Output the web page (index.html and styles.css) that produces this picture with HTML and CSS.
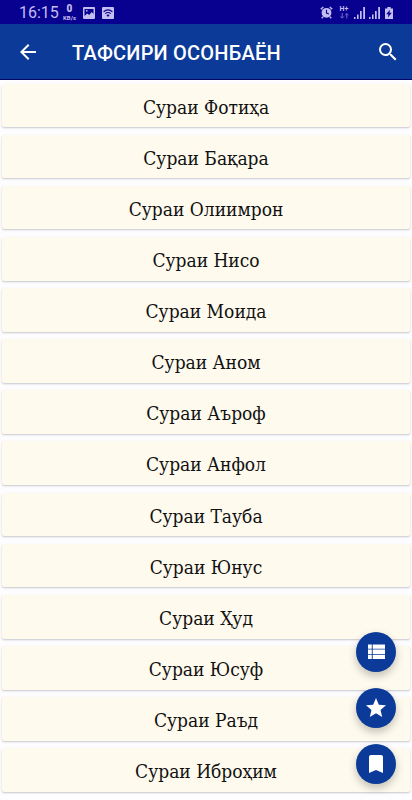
FILE: index.html
```html
<!DOCTYPE html>
<html lang="tg">
<head>
    <meta charset="UTF-8">
    <meta name="viewport" content="width=device-width, initial-scale=1.0">
    <title>Тафсири Осонбаён</title>
    <link rel="stylesheet" href="styles.css">
</head>
<body>
    <div class="status-bar">
        <span class="clock">16:15</span>
        <div class="speed"><b>0</b><span>KB/s</span></div>
        <svg class="picture" width="12" height="12" viewBox="0 0 12 12">
            <path fill-rule="evenodd" d="M1 0h10a1 1 0 0 1 1 1v10a1 1 0 0 1-1 1H1a1 1 0 0 1-1-1V1a1 1 0 0 1 1-1zM1.5 2v7l2.7-2.5 2 1.5 2.5-3 1.8 2V2zM3 3h1.5v1.5H3z"/>
        </svg>
        <svg class="wifi" width="12" height="12" viewBox="0 0 12 12">
            <rect width="12" height="12" rx="1"/>
            <path class="cut" d="M1.6 4.7q4.4-3.6 8.8 0M3.2 6.6q2.8-2.2 5.6 0"/>
            <path class="dark" d="M4.4 8q1.6-1.2 3.2 0L6 10z"/>
        </svg>
        <svg class="alarm" width="13" height="13" viewBox="0 0 13 13">
            <circle cx="6.5" cy="6.8" r="4.9"/>
            <path class="line" d="M.8 3.2L3.3 1M12.2 3.2L9.7 1M3 10.8l-1.2 1.4M10 10.8l1.2 1.4"/>
            <path class="cut" d="M6.5 3.8v3.3l2.4 1"/>
        </svg>
        <div class="network"><b>H+</b>
            <svg width="9" height="6" viewBox="0 0 9 6"><path d="M2.2 0v5M.5 3.4l1.7 1.8 1.7-1.8M6.8 5.5v-5M5.1 2.2L6.8.5l1.7 1.7"/></svg>
        </div>
        <svg class="signal" width="11" height="12" viewBox="0 0 11 12"><path d="M0 10h1.5v2H0zM3 7.5h1.6V12H3zM6 4h1.7v8H6zM9.2 0H11v12H9.2z"/></svg>
        <svg class="signal" width="11" height="12" viewBox="0 0 11 12"><path d="M0 10h1.5v2H0zM3 7.5h1.6V12H3zM6 4h1.7v8H6zM9.2 0H11v12H9.2z"/></svg>
        <svg class="battery" width="8" height="12" viewBox="0 0 8 12">
            <path d="M2.3 0h3.4v1.4H8V12H0V1.4h2.3z"/>
            <path class="dark" d="M4.9 2.7L1.2 7.2h2.2l-.5 3.2 3.9-4.7H4.5z"/>
        </svg>
    </div>

    <header class="app-bar">
        <svg class="back" width="24" height="24" viewBox="0 0 24 24"><path d="M20 11H7.83l5.59-5.59L12 4l-8 8 8 8 1.41-1.41L7.83 13H20v-2z"/></svg>
        <h1>ТАФСИРИ ОСОНБАЁН</h1>
        <svg class="search" width="24" height="24" viewBox="0 0 24 24"><path d="M15.5 14h-.79l-.28-.27A6.47 6.47 0 0 0 16 9.5 6.5 6.5 0 1 0 9.5 16c1.61 0 3.09-.59 4.23-1.57l.27.28v.79l5 4.99L20.49 19l-4.99-5zm-6 0a4.5 4.5 0 1 1 0-9 4.5 4.5 0 0 1 0 9z"/></svg>
    </header>

    <main class="list">
        <div class="card">Сураи Фотиҳа</div>
        <div class="card">Сураи Бақара</div>
        <div class="card">Сураи Олиимрон</div>
        <div class="card">Сураи Нисо</div>
        <div class="card">Сураи Моида</div>
        <div class="card">Сураи Аном</div>
        <div class="card">Сураи Аъроф</div>
        <div class="card">Сураи Анфол</div>
        <div class="card">Сураи Тауба</div>
        <div class="card">Сураи Юнус</div>
        <div class="card">Сураи Ҳуд</div>
        <div class="card">Сураи Юсуф</div>
        <div class="card">Сураи Раъд</div>
        <div class="card">Сураи Иброҳим</div>
    </main>

    <div class="buttons">
        <button class="fab"><svg width="24" height="24" viewBox="0 0 24 24"><path d="M4 4.5h3.8v4.3H4zM8.7 4.5H21v4.3H8.7zM4 9.6h3.8v4.3H4zM8.7 9.6H21v4.3H8.7zM4 14.7h3.8V19H4zM8.7 14.7H21V19H8.7z"/></svg></button>
        <button class="fab"><svg width="24" height="24" viewBox="0 0 24 24"><path d="M12 17.27L18.18 21l-1.64-7.03L22 9.24l-7.19-.61L12 2 9.19 8.63 2 9.24l5.46 4.73L5.82 21z"/></svg></button>
        <button class="fab"><svg width="24" height="24" viewBox="0 0 24 24"><path d="M17 3H7c-1.1 0-2 .9-2 2v16l7-3 7 3V5c0-1.1-.9-2-2-2z"/></svg></button>
    </div>
</body>
</html>
```

FILE: styles.css
```css
* {
    box-sizing: border-box;
}
body {
    margin: 0;
    height: 800px;
    overflow: hidden;
    background: #fdfdff;
    font-family: Roboto, sans-serif;
}
.status-bar {
    display: flex;
    align-items: center;
    height: 24px;
    padding: 1px 19px 0;
    background: #08008f;
    color: #c3bdf0;
    fill: #c3bdf0;
}
.clock {
    width: 43px;
    font-size: 16px;
    line-height: 24px;
}
.speed {
    display: flex;
    flex-direction: column;
    align-items: center;
    width: 15px;
    font-size: 6px;
    font-weight: bold;
    line-height: 7px;
}
.speed b {
    font-size: 10px;
    line-height: 10px;
}
.picture {
    margin-left: 6px;
}
.wifi {
    margin-left: 7px;
}
.cut {
    fill: none;
    stroke: #08008f;
    stroke-width: 1.1;
}
.dark {
    fill: #08008f;
}
.line {
    stroke: #c3bdf0;
    stroke-width: 1.5;
}
.alarm {
    margin-left: auto;
}
.network {
    display: flex;
    flex-direction: column;
    align-items: center;
    width: 10px;
    margin: 0 5px 0 6px;
    font-size: 7px;
    line-height: 7px;
}
.network svg {
    fill: none;
    stroke: #746ccb;
}
.signal {
    margin-right: 4px;
}
.battery {
    margin-left: 1px;
}
.app-bar {
    display: flex;
    align-items: center;
    height: 56px;
    padding: 0 12px 0 16px;
    border-bottom: 1px solid #00066a;
    background: #0b3a98;
    color: #fff;
    fill: #fff;
}
.app-bar h1 {
    flex: 1;
    margin: 2px 0 0 32px;
    font-size: 20px;
    font-weight: 500;
    letter-spacing: 0.2px;
    line-height: 24px;
    white-space: nowrap;
}
.list {
    display: flex;
    flex-direction: column;
    gap: 7.55px;
    padding: 3.5px 2px 0;
}
.card {
    height: 43.6px;
    border-radius: 2px;
    background: #fefaee;
    box-shadow: 0 1px 2px rgba(0, 0, 30, 0.22);
    color: #111;
    font-family: "DejaVu Serif Condensed", "DejaVu Serif", serif;
    font-size: 19px;
    font-stretch: condensed;
    line-height: 46px;
    text-align: center;
}
.buttons {
    position: fixed;
    right: 16px;
    bottom: 16.5px;
    display: flex;
    flex-direction: column;
    gap: 16px;
}
.fab {
    display: flex;
    align-items: center;
    justify-content: center;
    width: 40px;
    height: 40px;
    padding: 0;
    border: none;
    border-radius: 50%;
    background: #0b3a98;
    fill: #fff;
    box-shadow: 0 4px 9px rgba(0, 0, 0, 0.24);
}
```
